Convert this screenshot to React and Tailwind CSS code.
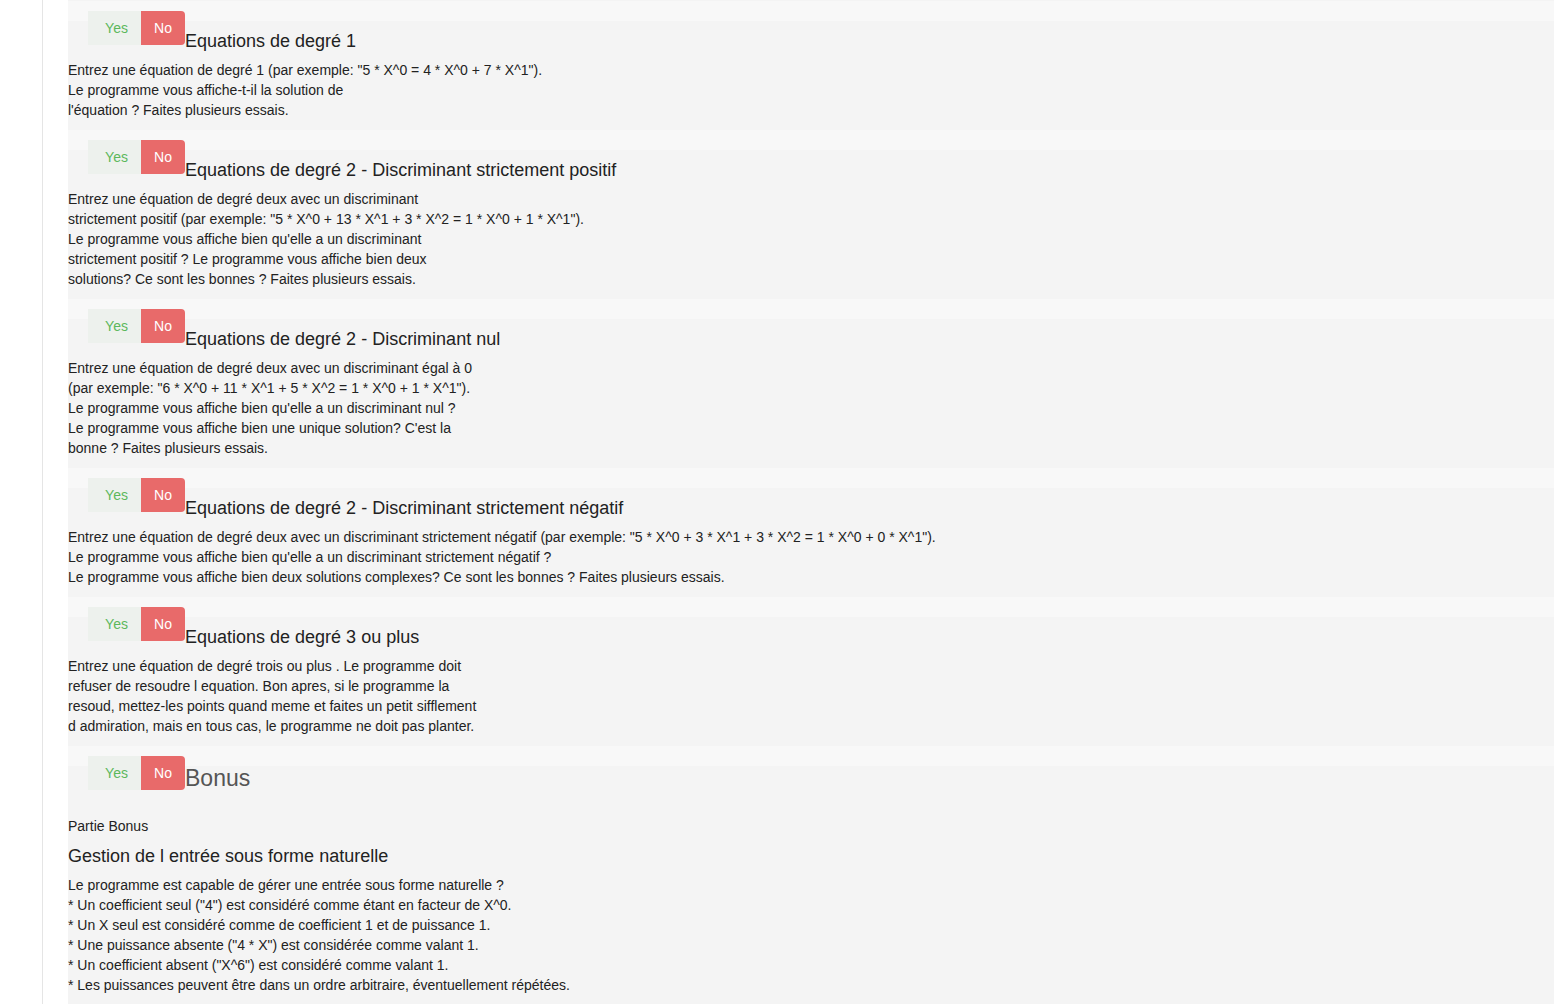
const sections = [
  {
    title: "Equations de degré 1",
    lines: [
      'Entrez une équation de degré 1 (par exemple: "5 * X^0 = 4 * X^0 + 7 * X^1").',
      "Le programme vous affiche-t-il la solution de",
      "l'équation ? Faites plusieurs essais.",
    ],
  },
  {
    title: "Equations de degré 2 - Discriminant strictement positif",
    lines: [
      "Entrez une équation de degré deux avec un discriminant",
      'strictement positif (par exemple: "5 * X^0 + 13 * X^1 + 3 * X^2 = 1 * X^0 + 1 * X^1").',
      "Le programme vous affiche bien qu'elle a un discriminant",
      "strictement positif ? Le programme vous affiche bien deux",
      "solutions? Ce sont les bonnes ? Faites plusieurs essais.",
    ],
  },
  {
    title: "Equations de degré 2 - Discriminant nul",
    lines: [
      "Entrez une équation de degré deux avec un discriminant égal à 0",
      '(par exemple: "6 * X^0 + 11 * X^1 + 5 * X^2 = 1 * X^0 + 1 * X^1").',
      "Le programme vous affiche bien qu'elle a un discriminant nul ?",
      "Le programme vous affiche bien une unique solution? C'est la",
      "bonne ? Faites plusieurs essais.",
    ],
  },
  {
    title: "Equations de degré 2 - Discriminant strictement négatif",
    lines: [
      'Entrez une équation de degré deux avec un discriminant strictement négatif (par exemple: "5 * X^0 + 3 * X^1 + 3 * X^2 = 1 * X^0 + 0 * X^1").',
      "Le programme vous affiche bien qu'elle a un discriminant strictement négatif ?",
      "Le programme vous affiche bien deux solutions complexes? Ce sont les bonnes ? Faites plusieurs essais.",
    ],
  },
  {
    title: "Equations de degré 3 ou plus",
    lines: [
      "Entrez une équation de degré trois ou plus . Le programme doit",
      "refuser de resoudre l equation. Bon apres, si le programme la",
      "resoud, mettez-les points quand meme et faites un petit sifflement",
      "d admiration, mais en tous cas, le programme ne doit pas planter.",
    ],
  },
];

const bonusLines = [
  "Le programme est capable de gérer une entrée sous forme naturelle ?",
  '* Un coefficient seul ("4") est considéré comme étant en facteur de X^0.',
  "* Un X seul est considéré comme de coefficient 1 et de puissance 1.",
  '* Une puissance absente ("4 * X") est considérée comme valant 1.',
  '* Un coefficient absent ("X^6") est considéré comme valant 1.',
  "* Les puissances peuvent être dans un ordre arbitraire, éventuellement répétées.",
];

function YesNo() {
  return (
    <div className="ml-5 flex h-[34px] shrink-0 text-[14px]">
      <button className="w-[53px] bg-[#edf1ed] pl-[4px] text-[#5cb85c]">Yes</button>
      <button className="w-[44px] rounded-r-[4px] bg-[#e86a6a] text-white">No</button>
    </div>
  );
}

function Paragraph({ lines }) {
  return (
    <p className="text-[14px] leading-[20px] text-[#222]">
      {lines.map((l, i) => (
        <span key={i}>
          {l}
          {i < lines.length - 1 && <br />}
        </span>
      ))}
    </p>
  );
}

function Section({ title, lines }) {
  return (
    <section className="bg-[linear-gradient(to_bottom,#f8f8f8_20px,#f4f4f4_20px)] pt-[10px] pb-[10px]">
      <div className="flex items-start">
        <YesNo />
        <h4 className="mt-[20px] text-[18px] leading-[20px] text-[#222]">{title}</h4>
      </div>
      <div className="mt-[9px]">
        <Paragraph lines={lines} />
      </div>
    </section>
  );
}

export default function App() {
  return (
    <div className="flex h-screen overflow-hidden bg-white font-['Liberation_Sans',Arial,sans-serif]">
      <div className="w-[43px] shrink-0 border-r border-[#e5e5e5]" />
      <main className="ml-[25px] flex-1 bg-[#f4f4f4] pt-px">
        {sections.map((s) => (
          <Section key={s.title} {...s} />
        ))}
        <section className="bg-[linear-gradient(to_bottom,#f8f8f8_20px,#f4f4f4_20px)] pt-[10px] pb-[10px]">
          <div className="flex items-start">
            <YesNo />
            <h3 className="mt-[9px] text-[23px] leading-[26px] text-[#555]">Bonus</h3>
          </div>
          <p className="mt-[25px] text-[14px] leading-[20px] text-[#222]">Partie Bonus</p>
          <h4 className="mt-[10px] text-[18px] leading-[20px] text-[#222]">
            Gestion de l entrée sous forme naturelle
          </h4>
          <div className="mt-[9px]">
            <Paragraph lines={bonusLines} />
          </div>
        </section>
      </main>
    </div>
  );
}
